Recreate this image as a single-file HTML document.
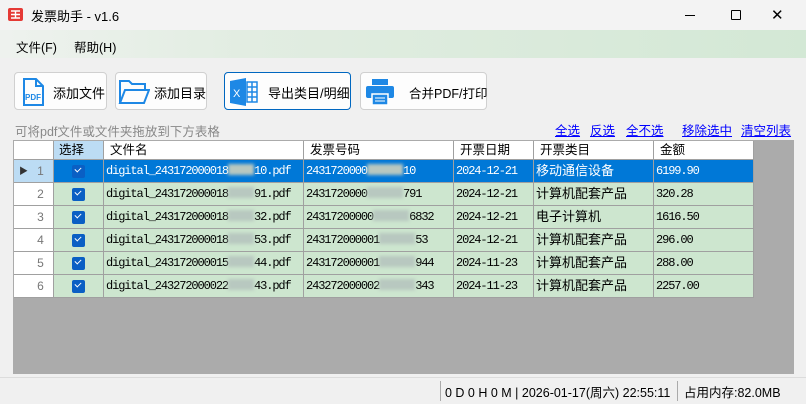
<!DOCTYPE html>
<html><head><meta charset="utf-8"><style>
*{margin:0;padding:0;box-sizing:border-box}
body{width:806px;height:404px;overflow:hidden;background:#f0f0f0;font-family:"Liberation Sans","Noto Sans CJK SC",sans-serif;font-size:12px;color:#000;position:relative}
.a{position:absolute;white-space:nowrap}
.btn{position:absolute;top:72px;height:38px;background:#fdfdfd;border:1px solid #d0d0d0;border-radius:4px;font-size:13px;white-space:nowrap}
.btn span{position:absolute;top:10px}
.lk{position:absolute;top:120px;color:#0000ff;text-decoration:underline;font-size:12.5px}
.grid{position:absolute;left:13px;top:140px;width:781px;height:234px;background:#ababab}
.row{position:absolute;left:1px;height:23px;width:739px}
.c{position:absolute;top:0;height:23px;border-right:1px solid #a0a0a0;border-bottom:1px solid #a0a0a0;line-height:22px;padding-left:2px;white-space:nowrap;overflow:hidden}
.m{font-family:"Liberation Mono",monospace;font-size:12px;letter-spacing:-1.1px}
.g{background:#cde6cf}
.s{background:#0078d7;color:#fff}
.cb{position:absolute;left:18px;top:5px;width:13px;height:13px;background:#0a5fc4;border-radius:2px}
.cb:after{content:"";position:absolute;left:3px;top:2px;width:5px;height:3px;border-left:1.5px solid #fff;border-bottom:1.5px solid #fff;transform:rotate(-45deg)}
.blur{display:inline-block;width:26px;height:11px;background:#b8c8c0;vertical-align:-1px;filter:blur(1.5px)}
.rh{background:#fff;color:#777;text-align:center;padding-left:14px}
</style></head><body>
<div class="a" style="left:0;top:0;width:806px;height:30px;background:#f3f3f3"></div>
<svg class="a" style="left:8px;top:8px" width="15" height="13" viewBox="0 0 15 13"><rect width="15" height="13" rx="2" fill="#e53935"/><path d="M3 3h9M3 6.5h9M3 10h9M7.5 3v7" stroke="#fff" stroke-width="1.4"/></svg>
<div class="a" style="left:31px;top:6px;font-size:13px">发票助手 - v1.6</div>
<div class="a" style="left:685px;top:15px;width:10px;height:1px;background:#000"></div>
<div class="a" style="left:731px;top:10px;width:10px;height:10px;border:1px solid #000;border-radius:1px"></div>
<div class="a" style="left:771px;top:6px;font-size:15px">✕</div>
<div class="a" style="left:0;top:30px;width:806px;height:28px;background:linear-gradient(90deg,#eef2ee,#e2ede2 30%,#d3e8d5)"></div>
<div class="a" style="left:16px;top:37px;font-size:12.5px">文件(F)</div>
<div class="a" style="left:74px;top:37px;font-size:12.5px">帮助(H)</div>

<div class="btn" style="left:14px;width:93px"><svg class="a" style="left:6px;top:5px" width="26" height="28" viewBox="0 0 26 28"><path d="M3 1h12l7 7v19H3z" fill="none" stroke="#1e88e5" stroke-width="2"/><path d="M15 1v7h7" fill="none" stroke="#1e88e5" stroke-width="2"/><text x="4" y="22" font-size="8" font-weight="bold" fill="#1e88e5" font-family="Liberation Sans">PDF</text></svg><span style="left:38px">添加文件</span></div>
<div class="btn" style="left:115px;width:92px"><svg class="a" style="left:2px;top:5px" width="32" height="28" viewBox="0 0 32 28"><path d="M2 25V3h9l3 3h13v5" fill="none" stroke="#1e88e5" stroke-width="2"/><path d="M2 25l5-13h24l-5 13z" fill="none" stroke="#1e88e5" stroke-width="2"/></svg><span style="left:38px">添加目录</span></div>
<div class="btn" style="left:224px;width:127px;border-color:#0067c0"><svg class="a" style="left:4px;top:4px" width="30" height="30" viewBox="0 0 30 30"><path d="M1 4l16-3v28L1 26z" fill="#1e88e5"/><text x="4" y="20" font-size="11" fill="#fff" font-family="Liberation Sans">X</text><rect x="18" y="5" width="10" height="20" fill="none" stroke="#1e88e5" stroke-width="1.5"/><path d="M18 10h10M18 15h10M18 20h10M23 5v20" stroke="#1e88e5" stroke-width="1.5"/></svg><span style="left:43px">导出类目/明细</span></div>
<div class="btn" style="left:360px;width:127px"><svg class="a" style="left:3px;top:4px" width="32" height="30" viewBox="0 0 32 30"><rect x="8" y="2" width="16" height="6" fill="#1e88e5"/><rect x="2" y="9" width="28" height="12" rx="2" fill="#1e88e5"/><rect x="8" y="17" width="16" height="11" fill="#1e88e5" stroke="#fff" stroke-width="1.5"/><path d="M11 21h10M11 24h10" stroke="#fff"/></svg><span style="left:48px;font-size:12.5px">合并PDF/打印</span></div>

<div class="a" style="left:15px;top:121px;color:#888;font-size:12.5px">可将pdf文件或文件夹拖放到下方表格</div>
<span class="lk" style="left:555px">全选</span><span class="lk" style="left:590px">反选</span><span class="lk" style="left:626px">全不选</span><span class="lk" style="left:682px">移除选中</span><span class="lk" style="left:741px">清空列表</span>

<div class="grid">
<div class="row" style="top:1px;height:19px">
<div class="c" style="left:0;width:40px;height:19px;background:#fff"></div>
<div class="c" style="left:40px;width:50px;height:19px;background:#bcdcf4;line-height:18px;padding-left:5px;font-size:12.5px">选择</div>
<div class="c" style="left:90px;width:200px;height:19px;background:#fff;line-height:18px;padding-left:6px;font-size:12.5px">文件名</div>
<div class="c" style="left:290px;width:150px;height:19px;background:#fff;line-height:18px;padding-left:6px;font-size:12.5px">发票号码</div>
<div class="c" style="left:440px;width:80px;height:19px;background:#fff;line-height:18px;padding-left:6px;font-size:12.5px">开票日期</div>
<div class="c" style="left:520px;width:120px;height:19px;background:#fff;line-height:18px;padding-left:6px;font-size:12.5px">开票类目</div>
<div class="c" style="left:640px;width:100px;height:19px;background:#fff;line-height:18px;padding-left:6px;font-size:12.5px">金额</div>
</div>
</div>
<div id="rows"></div>
<script>
var d=[["18","10","2431720000","10","2024-12-21","移动通信设备","6199.90"],["18","91","2431720000","791","2024-12-21","计算机配套产品","320.28"],["18","32","24317200000","6832","2024-12-21","电子计算机","1616.50"],["18","53","243172000001","53","2024-12-21","计算机配套产品","296.00"],["15","44","243172000001","944","2024-11-23","计算机配套产品","288.00"],["22","43","243272000002","343","2024-11-23","计算机配套产品","2257.00"]];
var h="";d.forEach(function(r,i){var cls=i==0?"s":"g";var pre=i==5?"digital_2432720000":"digital_2431720000";
h+='<div class="row" style="left:14px;top:'+(160+i*23)+'px">'+
'<div class="c rh" style="left:0;width:40px;'+(i==0?'background:#bcdcf4':'')+'">'+(i==0?'<span style="position:absolute;left:5px;color:#333;font-size:9px">▶</span>':'')+(i+1)+'</div>'+
'<div class="c '+cls+'" style="left:40px;width:50px"><div class="cb"></div></div>'+
'<div class="c m '+cls+'" style="left:90px;width:200px">'+pre+r[0]+'<span class="blur"></span>'+r[1]+'.pdf</div>'+
'<div class="c m '+cls+'" style="left:290px;width:150px">'+r[2]+'<span class="blur" style="width:36px"></span>'+r[3]+'</div>'+
'<div class="c m '+cls+'" style="left:440px;width:80px">'+r[4]+'</div>'+
'<div class="c '+cls+'" style="left:520px;width:120px;font-size:13px">'+r[5]+'</div>'+
'<div class="c m '+cls+'" style="left:640px;width:100px">'+r[6]+'</div></div>';});
document.getElementById("rows").innerHTML=h;
</script>
<div class="a" style="left:0;top:377px;width:806px;height:1px;background:#dcdcdc"></div>
<div class="a" style="left:440px;top:381px;width:1px;height:20px;background:#aaa"></div>
<div class="a" style="left:677px;top:381px;width:1px;height:20px;background:#aaa"></div>
<div class="a" style="left:445px;top:382px;font-size:12.5px">0 D 0 H 0 M | 2026-01-17(周六) 22:55:11</div>
<div class="a" style="left:684px;top:382px;font-size:12.5px">占用内存:82.0MB</div>
</body></html>
